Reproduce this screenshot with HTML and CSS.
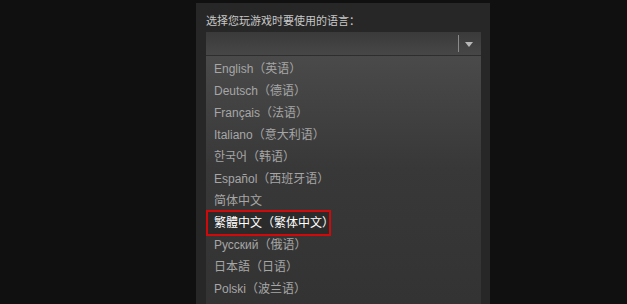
FILE: index.html
```html
<!DOCTYPE html>
<html lang="zh">
<head>
  <meta charset="UTF-8" />
  <title>语言</title>
  <link rel="stylesheet" href="styles.css">
</head>
<body>
  <div class="panel">
    <p class="label">选择您玩游戏时要使用的语言：</p>
    <div class="select">
      <span class="sep"></span>
      <span class="arrow"></span>
    </div>
    <ul class="options">
      <li>English（英语）</li>
      <li>Deutsch（德语）</li>
      <li>Français（法语）</li>
      <li>Italiano（意大利语）</li>
      <li>한국어（韩语）</li>
      <li>Español（西班牙语）</li>
      <li>简体中文</li>
      <li class="marked">繁體中文（繁体中文）</li>
      <li>Русский（俄语）</li>
      <li>日本語（日语）</li>
      <li>Polski（波兰语）</li>
    </ul>
  </div>
</body>
</html>
```

FILE: styles.css
```css
* { box-sizing: border-box; margin: 0; padding: 0; }
body {
  background: #101010;
  font-family: "Liberation Sans", "Noto Sans CJK SC", sans-serif;
  font-size: 12px;
  height: 304px;
  overflow: hidden;
}
.panel {
  margin: 3px 0 0 196px;
  width: 294px;
  height: 301px;
  background: #272727;
  padding: 0 9px 0 10px;
}
.label {
  color: #c8c8c8;
  font-size: 11px;
  height: 29px;
  padding-top: 11px;
  line-height: 14px;
}
.select {
  height: 24px;
  background: linear-gradient(#3a3a3a, #474747);
  border-bottom: 1px solid #2e2e2e;
  position: relative;
  display: flex;
  justify-content: flex-end;
  align-items: center;
  padding-right: 8px;
  gap: 6px;
}
.sep {
  width: 1px;
  height: 17px;
  background: #8a8a8a;
}
.arrow {
  width: 0;
  height: 0;
  border-left: 4px solid transparent;
  border-right: 4px solid transparent;
  border-top: 5px solid #b8b8b8;
  margin-top: 1px;
}
.options {
  list-style: none;
  background: linear-gradient(#4a4a4a, #383838 45%, #333 100%);
  padding-top: 2px;
  height: 248px;
}
.options li {
  height: 22px;
  line-height: 22px;
  padding-left: 8px;
  color: #a6a6a6;
  position: relative;
}
.options li.marked {
  color: #fff;
  background: #2b2b2b;
  width: 125px;
}
.options li.marked::after {
  content: "";
  position: absolute;
  left: 0;
  right: 0;
  top: -2px;
  bottom: -2px;
  border: 2px solid #d00a0a;
}
```
